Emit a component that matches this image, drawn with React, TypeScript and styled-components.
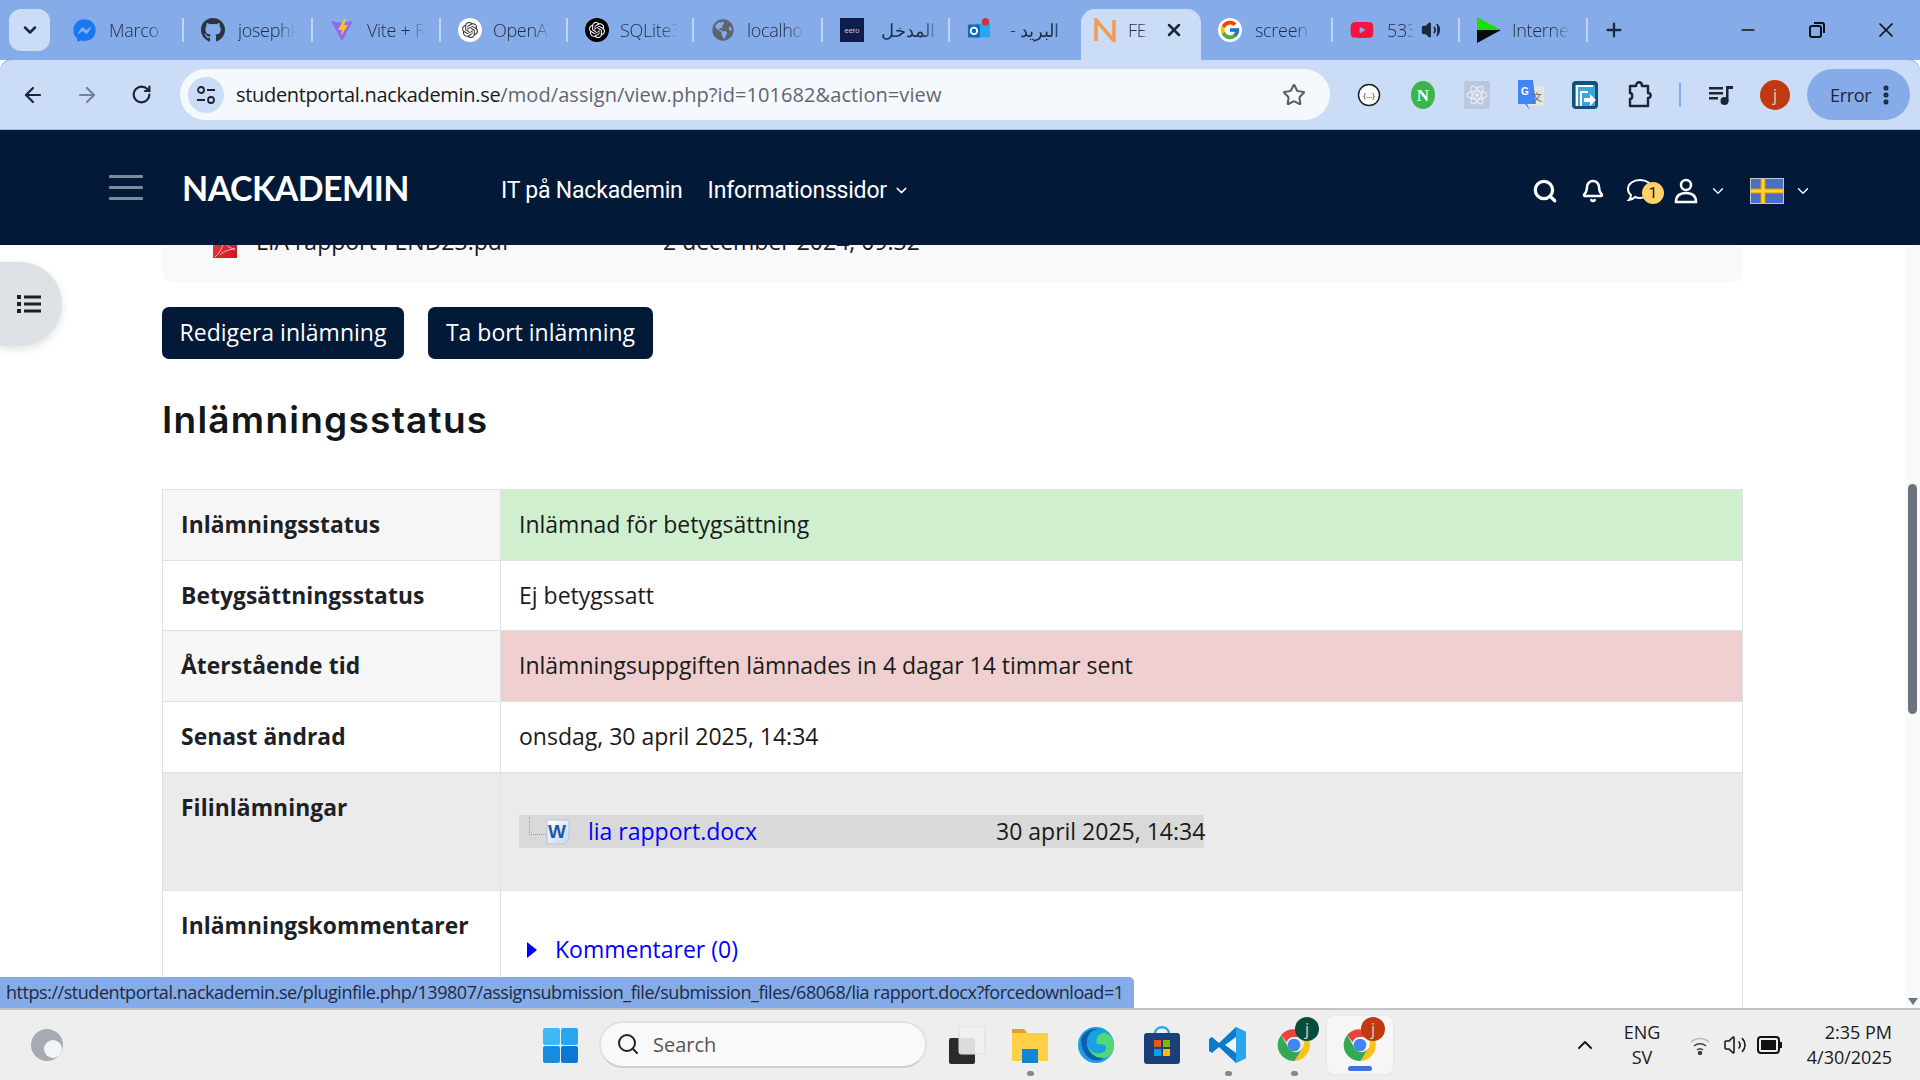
import React from 'react';
import styled, { createGlobalStyle } from 'styled-components';
import { ArrowLeft, ArrowRight, RotateCw, Star, MoreVertical, Search, Bell, ChevronDown, ChevronUp, Plus, X, Minus, Volume2 } from 'lucide-react';
import { FaFacebookMessenger, FaGithub, FaGlobeAmericas, FaYoutube } from 'react-icons/fa';
import { SiOpenai } from 'react-icons/si';
import { FcGoogle } from 'react-icons/fc';

const Global = createGlobalStyle`
  html, body { margin: 0; padding: 0; background: #fff; overflow: hidden; }
  * { box-sizing: border-box; }
  body { font-family: "Open Sans", "DejaVu Sans", sans-serif; }
`;

const Screen = styled.div`
  position: relative; width: 1920px; height: 1080px; display: flex; flex-direction: column; overflow: hidden; background: #fff;
`;
const TabBar = styled.div`
  height: 60px; flex: none; background: #85ace8; display: flex; align-items: flex-end; padding-left: 9px;
`;
const TabToggle = styled.div`
  width: 41px; height: 42px; margin: 0 5px 9px 0; border-radius: 12px; background: #cbdcf6; display: flex; align-items: center; justify-content: center; color: #1d2a3e;
`;
const Tab = styled.div<{ $w: number; $sep?: boolean; $active?: boolean }>`
  position: relative; width: ${p => p.$w}px; height: 51px; flex: none; display: flex; align-items: center; padding: 0 0 9px ${p => p.$active ? 12 : 17}px; gap: 13px;
  ${p => p.$active ? 'background:#cbdcf6;border-radius:14px 14px 0 0;' : ''}
  &::after { content: ""; position: absolute; right: 0; top: 9px; width: 2px; height: 24px; background: ${p => p.$sep ? '#c3d5f3' : 'transparent'}; }
`;
const TabIcon = styled.span`
  width: 24px; height: 26px; flex: none; display: flex; align-items: center; justify-content: center;
`;
const IconDot = styled.span<{ $bg: string }>`
  width: 24px; height: 24px; border-radius: 50%; background: ${p => p.$bg}; display: flex; align-items: center; justify-content: center;
`;
const TabLabel = styled.span<{ $w?: number; $shift?: number }>`
  width: ${p => p.$w ?? 58}px; margin-left: ${p => p.$shift ?? 0}px; flex: none; white-space: nowrap; font-size: 18px; font-weight: 300; letter-spacing: -0.3px; color: #1e2c44;
  -webkit-mask-image: linear-gradient(90deg, #000 70%, transparent 100%); mask-image: linear-gradient(90deg, #000 70%, transparent 100%);
`;
const TabClose = styled.span`
  display: flex; margin-left: 3px; color: #1d2a3e;
`;
const TabSound = styled.span`
  display: flex; margin-left: -6px; color: #1d2a3e;
`;
const NewTab = styled.div`
  width: 52px; height: 51px; padding-bottom: 9px; display: flex; align-items: center; justify-content: center; color: #1d2a3e;
`;
const WindowButtons = styled.div`
  margin-left: auto; height: 60px; display: flex; align-items: center; color: #111;
`;
const WindowButton = styled.span`
  width: 69px; display: flex; justify-content: center;
`;
const Toolbar = styled.div`
  height: 70px; flex: none; background: #cbdcf6; border-radius: 12px 12px 0 0; display: flex; align-items: flex-start; padding: 9px 10px 0 6px; border-bottom: 1px solid #aab6c8; color: #1d2a3e;
  box-shadow: 0 -1px 0 #85ace8;
`;
const ToolCell = styled.div<{ $muted?: boolean; $w?: number; $pl?: number }>`
  width: ${p => p.$w ?? 54}px; height: 51px; flex: none; padding-left: ${p => p.$pl ?? 0}px; display: flex; align-items: center; justify-content: center; color: ${p => p.$muted ? '#75839a' : '#1c2535'};
`;
const AddressBar = styled.div`
  width: 1150px; height: 51px; flex: none; margin: 0 12px; border-radius: 26px; background: #f5f8fd; display: flex; align-items: center; padding-left: 8px;
`;
const SiteInfo = styled.span`
  width: 36px; height: 36px; border-radius: 50%; background: #cbdcf6; display: flex; align-items: center; justify-content: center; color: #1c2535;
`;
const UrlText = styled.span`
  margin-left: 12px; font-size: 20px; letter-spacing: -0.31px; color: #1a1a1a; white-space: nowrap;
  em { font-style: normal; color: #5f6673; letter-spacing: 0.08px; }
`;
const StarSlot = styled.span`
  margin-left: auto; margin-right: 24px; display: flex; color: #555c66;
`;
const ToolSep = styled.span`
  width: 2px; height: 24px; margin: 14px 20px 0 13px; background: #85ace8; flex: none;
`;
const Avatar = styled.span<{ $bg: string; $size?: number }>`
  width: ${p => p.$size ?? 30}px; height: ${p => p.$size ?? 30}px; border-radius: 50%; background: ${p => p.$bg}; color: #e8cdbd; display: flex; align-items: center; justify-content: center; font-size: 16px;
`;
const BadgeAvatar = styled(Avatar)`
  position: absolute; right: 8px; top: 1px;
`;
const ErrorPill = styled.div`
  width: 103px; height: 51px; margin-left: 6px; border-radius: 26px; background: #85ace8; display: flex; align-items: center; padding-left: 23px; font-size: 18px; letter-spacing: -0.3px; color: #1c2535; gap: 3px;
`;
const NavBar = styled.header`
  height: 115px; flex: none; background: #021938; display: flex; align-items: center; padding-left: 109px; color: #fff;
`;
const Hamburger = styled.div`
  width: 34px; height: 25px; display: flex; flex-direction: column; justify-content: space-between; flex: none;
  span { display: block; height: 3px; background: #7e8b9d; border-radius: 1px; }
`;
const Logo = styled.div`
  margin-left: 39px; width: 226px; font-family: "Lato", sans-serif; font-size: 34px; font-weight: 700; letter-spacing: -0.55px; white-space: nowrap;
`;
const NavLink = styled.div<{ $first?: boolean }>`
  margin: 6px 0 0 ${p => p.$first ? 93 : 25}px; font-family: "Roboto", sans-serif; font-size: 23px; display: flex; align-items: center; gap: 6px; white-space: nowrap; letter-spacing: -0.2px;
`;
const NavRight = styled.div`
  margin: 6px 0 0 auto; padding-right: 107px; display: flex; align-items: center;
`;
const NavCell = styled.div<{ $w: number }>`
  position: relative; width: ${p => p.$w}px; display: flex; justify-content: center; align-items: center;
`;
const Badge = styled.span`
  position: absolute; left: 25px; top: 4px; width: 22px; height: 22px; border-radius: 50%; background: #ffd166; color: #111; font-size: 15px; display: flex; align-items: center; justify-content: center; font-family: "Roboto", sans-serif;
`;
const FlagBox = styled.div`
  width: 34px; height: 26px; margin: 0 9px 0 22px; display: flex;
`;
const Body = styled.div`
  flex: 1; min-height: 0; display: flex; overflow: hidden;
`;
const Main = styled.main`
  position: relative; flex: 1; padding: 0 162px; overflow: hidden; color: #1a1a1a;
`;
const FileCard = styled.div`
  width: 1581px; height: 38px; background: #f8f9fa; border-radius: 0 0 12px 12px; overflow: hidden; display: flex; align-items: flex-end; padding: 0 0 25px 51px; font-size: 23px; line-height: 33px;
`;
const PdfMark = styled.svg`
  width: 24px; height: 30px; flex: none;
`;
const CardName = styled.span`
  margin-left: 19px; width: 407px; flex: none; white-space: nowrap;
`;
const Buttons = styled.div`
  display: flex; gap: 24px; margin-top: 24px;
`;
const Btn = styled.div<{ $w: number }>`
  width: ${p => p.$w}px; height: 52px; border-radius: 7px; background: #021938; color: #fff; font-size: 23px; padding-bottom: 2px; display: flex; align-items: center; justify-content: center; white-space: nowrap;
`;
const Heading = styled.h2`
  margin: 36px 0 44px; height: 50px; font-family: "Inter", sans-serif; font-size: 37px; line-height: 50px; font-weight: 600; letter-spacing: 1.25px; color: #14171a;
`;
const Table = styled.table`
  width: 1581px; table-layout: fixed; border-collapse: collapse; font-size: 23px; line-height: 33px;
`;
const Row = styled.tr<{ $h: number }>`
  height: ${p => p.$h}px;
`;
const Th = styled.th<{ $bg?: string }>`
  width: 338px; padding: 18px 0 0 18px; vertical-align: top; text-align: left; font-weight: 700; font-size: 22.8px; letter-spacing: 0.08px; background: ${p => p.$bg ?? '#fff'}; border: 1px solid #dee2e6; white-space: nowrap; color: #1d2125;
`;
const Td = styled.td<{ $bg?: string; $pt?: number }>`
  padding: ${p => p.$pt ?? 18}px 0 0 18px; vertical-align: top; background: ${p => p.$bg ?? '#fff'}; border: 1px solid #dee2e6;
`;
const FileRow = styled.div`
  width: 685px; height: 33px; background: #d9d9d9; display: flex; align-items: center; white-space: nowrap; padding-left: 10px;
`;
const TreeLine = styled.span`
  width: 17px; height: 18px; margin-top: -12px; flex: none; border-left: 1px dotted #999; border-bottom: 1px dotted #999;
`;
const WordIcon = styled.svg`
  width: 24px; height: 26px; flex: none;
`;
const FileLink = styled.span`
  margin-left: 18px; color: #0000ff; width: 408px; flex: none;
`;
const CommentLink = styled.div`
  display: flex; align-items: center; padding-left: 8px; color: #0000ff; gap: 18px;
`;
const Triangle = styled.span`
  width: 0; height: 0; border-left: 10px solid #0000ff; border-top: 8px solid transparent; border-bottom: 8px solid transparent;
`;
const Drawer = styled.div`
  position: absolute; left: 0; top: 17px; width: 62px; height: 84px; border-radius: 0 42px 42px 0; background: #dee2e6; box-shadow: 0 3px 8px rgba(0,0,0,.12); display: flex; align-items: center; padding-left: 17px;
`;
const Scrollbar = styled.div`
  width: 15px; flex: none; background: #f8f9fa; position: relative; display: flex; flex-direction: column; align-items: center;
`;
const Thumb = styled.div`
  width: 9px; height: 230px; margin-top: 239px; border-radius: 5px; background: #6a737d;
`;
const ArrowDown = styled.div`
  margin-top: auto; margin-bottom: 3px; border-top: 7px solid #6a737d; border-left: 5px solid transparent; border-right: 5px solid transparent;
`;
const StatusBubble = styled.div`
  position: absolute; left: 0; top: 977px; width: 1134px; height: 31px; background: #85ace8; border-radius: 0 5px 0 0; padding-left: 6px; font-size: 18px; line-height: 30px; letter-spacing: -0.46px; color: #1d2a3e; white-space: nowrap; overflow: hidden;
`;
const Taskbar = styled.footer`
  height: 72px; flex: none; background: #eeeeee; border-top: 2px solid #c4c4c4; display: flex; align-items: center; padding-left: 30px; z-index: 1;
`;
const TaskApps = styled.div`
  margin-left: 477px; display: flex; align-items: center;
`;
const SearchBox = styled.div`
  width: 328px; height: 47px; margin: -2px 4px 0 21px; border-radius: 24px; background: #f9f9f9; border: 2px solid #e2e2e2; border-bottom-color: #cfcfcf; display: flex; align-items: center; padding-left: 15px; gap: 13px; font-size: 20px; color: #555;
`;
const AppCell = styled.div<{ $active?: boolean; $dot?: boolean; $pl?: number }>`
  position: relative; width: 66px; height: 58px; padding-left: ${p => p.$pl ?? 0}px; display: flex; align-items: center; justify-content: center; flex: none;
  ${p => p.$active ? 'background:#f6f6f6;border-radius:6px;box-shadow:0 0 1px #bbb;' : ''}
  ${p => p.$dot ? '&::after{content:"";position:absolute;left:30px;bottom:-2px;width:7px;height:5px;border-radius:3px;background:#888;}' : ''}
  ${p => p.$active ? '&::after{content:"";position:absolute;left:21px;bottom:3px;width:24px;height:5px;border-radius:3px;background:#3f72d8;}' : ''}
`;
const Tray = styled.div`
  margin-left: auto; display: flex; align-items: center; color: #1a1a1a; padding-right: 28px;
`;
const TrayLang = styled.div`
  width: 70px; margin: 0 5px 0 10px; text-align: center; font-size: 18px; line-height: 25px;
`;
const TrayIcon = styled.span`
  width: 35px; display: flex; justify-content: center;
`;
const Clock = styled.div`
  width: 100px; margin-left: 5px; text-align: right; font-size: 18px; line-height: 25px; white-space: nowrap;
`;

const Chrome = ({ s = 38 }: { s?: number }) => (
  <svg width={s} height={s} viewBox="0 0 48 48">
    <path d="M24 4a20 20 0 0 1 17.3 10H24a10 10 0 0 0-9.4 6.6L7.8 11.5A20 20 0 0 1 24 4z" fill="#e8453c" />
    <path d="M41.3 14A20 20 0 0 1 25 44l8.5-14.5A10 10 0 0 0 32 14z" fill="#fbc116" />
    <path d="M25 44A20 20 0 0 1 7.8 11.5l8.7 15A10 10 0 0 0 33.5 29.5z" fill="#34a853" />
    <circle cx="24" cy="24" r="8" fill="#4285f4" />
  </svg>
);

export default function App() {
  return (
    <Screen>
      <Global />
      <TabBar>
        <TabToggle><ChevronDown size={20} strokeWidth={3} /></TabToggle>
        <Tab $w={129} $sep><TabIcon><FaFacebookMessenger size={23} color="#1877f2" /></TabIcon><TabLabel>Marco</TabLabel></Tab>
        <Tab $w={129} $sep><TabIcon><FaGithub size={28} color="#2a3340" /></TabIcon><TabLabel>josephk</TabLabel></Tab>
        <Tab $w={128} $sep>
          <TabIcon><svg width="26" height="26" viewBox="0 0 24 24"><path d="M1 3l11 2 11-2-11 20z" fill="#8f6bf0" /><path d="M14 1L8 12l4 0-1 6 7-11h-4l2-6z" fill="#ffc31f" /></svg></TabIcon>
          <TabLabel>Vite + R</TabLabel>
        </Tab>
        <Tab $w={127} $sep><TabIcon><IconDot $bg="#fff"><SiOpenai size={16} color="#333" /></IconDot></TabIcon><TabLabel $shift={-2}>OpenA</TabLabel></Tab>
        <Tab $w={126} $sep><TabIcon><IconDot $bg="#000"><SiOpenai size={16} color="#fff" /></IconDot></TabIcon><TabLabel $shift={-2}>SQLite3</TabLabel></Tab>
        <Tab $w={129} $sep><TabIcon><FaGlobeAmericas size={22} color="#5b6470" /></TabIcon><TabLabel $shift={-1}>localho</TabLabel></Tab>
        <Tab $w={127} $sep>
          <TabIcon><svg width="24" height="24" viewBox="0 0 24 24"><rect width="24" height="24" fill="#0f1d4a" /><text x="12" y="15" textAnchor="middle" fontSize="7.5" fontFamily="Liberation Sans" fill="#c4cadb">eero</text></svg></TabIcon>
          <TabLabel $w={58} $shift={4}>المدخل</TabLabel>
        </Tab>
        <Tab $w={131}>
          <TabIcon><svg width="26" height="26" viewBox="0 0 26 26"><rect x="9" y="6" width="16" height="15" fill="#28a8ea" /><rect x="1" y="7" width="13" height="14" rx="1" fill="#0f6cbd" /><circle cx="7.5" cy="14" r="3.5" fill="none" stroke="#fff" strokeWidth="2" /><circle cx="20" cy="4" r="4" fill="#d13438" /></svg></TabIcon>
          <TabLabel $w={60} $shift={6}>- البريد</TabLabel>
        </Tab>
        <Tab $w={120} $active>
          <TabIcon><svg width="24" height="24" viewBox="0 0 24 24"><path d="M3 23V2l18 21V2" fill="none" stroke="#f59a50" strokeWidth="3.5" /></svg></TabIcon>
          <TabLabel $w={20} $shift={-2}>FEI</TabLabel>
          <TabClose><X size={20} strokeWidth={3} /></TabClose>
        </Tab>
        <Tab $w={132} $sep><TabIcon><IconDot $bg="#fff"><FcGoogle size={22} /></IconDot></TabIcon><TabLabel>screen</TabLabel></Tab>
        <Tab $w={127} $sep>
          <TabIcon><FaYoutube size={26} color="#f8123f" /></TabIcon><TabLabel $w={27}>533)</TabLabel>
          <TabSound><Volume2 size={20} fill="#1d2a3e" /></TabSound>
        </Tab>
        <Tab $w={128} $sep>
          <TabIcon><svg width="24" height="26" viewBox="0 0 24 26"><path d="M0 0l24 13H0z" fill="#19e000" /><path d="M0 26l24-13H0z" fill="#0a0a0a" /></svg></TabIcon>
          <TabLabel $shift={-2}>Interne</TabLabel>
        </Tab>
        <NewTab><Plus size={22} strokeWidth={2.5} /></NewTab>
        <WindowButtons>
          <WindowButton><Minus size={20} strokeWidth={2} /></WindowButton>
          <WindowButton><svg width="18" height="18" viewBox="0 0 18 18" fill="none" stroke="#111" strokeWidth="2"><rect x="2" y="5" width="11" height="11" rx="2" /><path d="M6 2h8a2 2 0 0 1 2 2v8" /></svg></WindowButton>
          <WindowButton><X size={24} strokeWidth={1.7} /></WindowButton>
        </WindowButtons>
      </TabBar>
      <Toolbar>
        <ToolCell><ArrowLeft size={24} strokeWidth={2.2} /></ToolCell>
        <ToolCell $muted><ArrowRight size={24} strokeWidth={2.2} /></ToolCell>
        <ToolCell><RotateCw size={21} strokeWidth={2.5} /></ToolCell>
        <AddressBar>
          <SiteInfo>
            <svg width="20" height="20" viewBox="0 0 20 20" fill="none" stroke="#1c2535" strokeWidth="1.8"><circle cx="5" cy="5" r="3" /><path d="M11 5h8M1 15h8" /><circle cx="15" cy="15" r="3" /></svg>
          </SiteInfo>
          <UrlText>studentportal.nackademin.se<em>/mod/assign/view.php?id=101682&action=view</em></UrlText>
          <StarSlot><Star size={24} strokeWidth={2} /></StarSlot>
        </AddressBar>
        <ToolCell><svg width="24" height="24" viewBox="0 0 24 24"><circle cx="12" cy="12" r="10.5" fill="#fff" stroke="#222" strokeWidth="1.5" /><text x="12" y="15" textAnchor="middle" fontSize="8" fill="#222">{'{…}'}</text></svg></ToolCell>
        <ToolCell><svg width="24" height="28" viewBox="0 0 24 28"><ellipse cx="12" cy="14" rx="12" ry="14" fill="#3cb54a" /><text x="12" y="20" textAnchor="middle" fontSize="17" fontWeight="700" fontFamily="Liberation Serif" fill="#fff">N</text></svg></ToolCell>
        <ToolCell><svg width="26" height="28" viewBox="0 0 26 28"><rect width="26" height="28" rx="2" fill="#b9c8df" /><g fill="none" stroke="#e6edf8" strokeWidth="1.2"><ellipse cx="13" cy="14" rx="10" ry="4" /><ellipse cx="13" cy="14" rx="10" ry="4" transform="rotate(60 13 14)" /><ellipse cx="13" cy="14" rx="10" ry="4" transform="rotate(120 13 14)" /></g><circle cx="13" cy="14" r="2" fill="#e6edf8" /></svg></ToolCell>
        <ToolCell><svg width="26" height="30" viewBox="0 0 26 30"><rect x="10" y="6" width="16" height="20" fill="#e8e6dc" /><path d="M0 0h15l3 24H9l3 6-5-6H0z" fill="#4285f4" /><text x="7" y="15" textAnchor="middle" fontSize="10" fontWeight="700" fontFamily="Liberation Sans" fill="#fff">G</text><text x="19" y="21" textAnchor="middle" fontSize="10" fontFamily="Noto Sans CJK SC" fill="#666">文</text></svg></ToolCell>
        <ToolCell><svg width="26" height="28" viewBox="0 0 26 28"><rect width="26" height="28" rx="4" fill="#12507e" /><rect x="3" y="4" width="20" height="21" fill="#38a6d8" /><path d="M5 25V5h16M9 25V11h7" fill="none" stroke="#fff" strokeWidth="2" /><path d="M12 17h6v-4l6 6-6 6v-4h-6z" fill="#fff" /></svg></ToolCell>
        <ToolCell $pl={4}>
          <svg width="26" height="28" viewBox="0 0 26 28" fill="none" stroke="#1c2535" strokeWidth="2.4" strokeLinejoin="round"><path d="M2 5h6c0-5 6-5 6 0h6v7c3.500 0 3.500 5 0 5v8H2v-7c3 0 3-6 0-6z" /></svg>
        </ToolCell>
        <ToolSep />
        <ToolCell $w={40}><svg width="24" height="22" viewBox="0 0 24 22" fill="#1c2535"><rect y="3" width="14" height="2.5" /><rect y="8" width="14" height="2.5" /><rect y="13" width="9" height="2.5" /><rect x="17" y="2" width="2.5" height="15" /><rect x="17" y="2" width="7" height="3" /><circle cx="15.5" cy="17" r="4" /></svg></ToolCell>
        <ToolCell $w={60} $pl={8}><Avatar $bg="#c0390f">j</Avatar></ToolCell>
        <ErrorPill>Error<MoreVertical size={24} strokeWidth={3} /></ErrorPill>
      </Toolbar>
      <NavBar>
        <Hamburger><span /><span /><span /></Hamburger>
        <Logo>NACKADEMIN</Logo>
        <NavLink $first>IT på Nackademin</NavLink>
        <NavLink>Informationssidor<ChevronDown size={17} strokeWidth={2} /></NavLink>
        <NavRight>
          <NavCell $w={48}><Search size={26} strokeWidth={3} /></NavCell>
          <NavCell $w={48}><Bell size={24} strokeWidth={2.5} /></NavCell>
          <NavCell $w={47}>
            <svg width="30" height="26" viewBox="0 0 30 26" fill="none" stroke="#fff" strokeWidth="2"><path d="M14 2c6.600 0 12 3.600 12 9s-5.400 9-12 9c-2 0-3 0-5-1-2 2-4 3-6 3 1-1 2-3 2-5-2-1.500-3-3.500-3-6 0-5.400 5.400-9 12-9z" /></svg>
            <Badge>1</Badge>
          </NavCell>
          <NavCell $w={44}><svg width="24" height="26" viewBox="0 0 24 26" fill="none" stroke="#fff" strokeWidth="2.5"><circle cx="12" cy="7" r="5" /><path d="M2 24c0-6 4-9 10-9s10 3 10 9z" /></svg></NavCell>
          <NavCell $w={20}><ChevronDown size={18} strokeWidth={1.8} /></NavCell>
          <FlagBox><svg width="34" height="26" viewBox="0 0 34 26"><rect width="34" height="26" fill="#c2c6cc" /><rect x="1" y="1" width="32" height="24" fill="#4a70c4" /><rect x="10.500" y="1" width="5" height="24" fill="#f08a1c" /><rect x="1" y="10.500" width="32" height="5" fill="#f08a1c" /><rect x="11.500" y="1" width="3" height="24" fill="#fbdc14" /><rect x="1" y="11.500" width="32" height="3" fill="#fbdc14" /></svg></FlagBox>
          <NavCell $w={20}><ChevronDown size={18} strokeWidth={1.8} /></NavCell>
        </NavRight>
      </NavBar>
      <Body>
        <Main>
          <FileCard>
            <PdfMark viewBox="0 0 24 30"><defs><linearGradient id="pdf" x1="0" y1="0" x2="1" y2="1"><stop offset="0" stopColor="#f04a4a" /><stop offset="1" stopColor="#c8141c" /></linearGradient></defs><rect width="24" height="30" fill="url(#pdf)" /><path d="M2 29c5-4 8-10 9-17 2 6 5 8 11 9-5 0-11 2-15 6" fill="none" stroke="#f7b4b4" strokeWidth="1" /></PdfMark>
            <CardName>LIA rapport FEND23.pdf</CardName>
            <span>2 december 2024, 09:32</span>
          </FileCard>
          <Buttons>
            <Btn $w={242}>Redigera inlämning</Btn>
            <Btn $w={225}>Ta bort inlämning</Btn>
          </Buttons>
          <Heading>Inlämningsstatus</Heading>
          <Table>
            <tbody>
              <Row $h={71}><Th $bg="#f6f6f6">Inlämningsstatus</Th><Td $bg="#cfefcf">Inlämnad för betygsättning</Td></Row>
              <Row $h={70}><Th>Betygsättningsstatus</Th><Td>Ej betygssatt</Td></Row>
              <Row $h={71}><Th $bg="#f6f6f6">Återstående tid</Th><Td $bg="#efcfcf">Inlämningsuppgiften lämnades in 4 dagar 14 timmar sent</Td></Row>
              <Row $h={71}><Th>Senast ändrad</Th><Td>onsdag, 30 april 2025, 14:34</Td></Row>
              <Row $h={118}>
                <Th $bg="#ebebeb">Filinlämningar</Th>
                <Td $bg="#ebebeb" $pt={42}>
                  <FileRow>
                    <TreeLine />
                    <WordIcon viewBox="0 0 24 26"><defs><linearGradient id="word" x1="0" y1="0" x2="1" y2="1"><stop offset="0" stopColor="#ffffff" /><stop offset="1" stopColor="#c6d6ee" /></linearGradient></defs><path d="M1 1h22v19l-5 5H1z" fill="url(#word)" stroke="#b4c4dc" /><text x="11" y="19" textAnchor="middle" fontSize="19" fontWeight="700" fontFamily="Liberation Sans" fill="#1c57b0">W</text></WordIcon>
                    <FileLink>lia rapport.docx</FileLink>
                    <span>30 april 2025, 14:34</span>
                  </FileRow>
                </Td>
              </Row>
              <Row $h={120}>
                <Th>Inlämningskommentarer</Th>
                <Td $pt={42}><CommentLink><Triangle />Kommentarer (0)</CommentLink></Td>
              </Row>
            </tbody>
          </Table>
          <Drawer><svg width="24" height="20" viewBox="0 0 24 20" fill="#1d2125"><rect x="0" y="1" width="4" height="4" /><rect x="0" y="8" width="4" height="4" /><rect x="0" y="15" width="4" height="4" /><rect x="7" y="1.500" width="17" height="3" /><rect x="7" y="8.500" width="17" height="3" /><rect x="7" y="15.500" width="17" height="3" /></svg></Drawer>
        </Main>
        <Scrollbar><Thumb /><ArrowDown /></Scrollbar>
      </Body>
      <Taskbar>
        <svg width="36" height="36" viewBox="0 0 36 36"><ellipse cx="17" cy="18" rx="16" ry="16" fill="#a4abb3" /><circle cx="23" cy="22" r="9" fill="#f2f4f6" /></svg>
        <TaskApps>
          <svg width="35" height="35" viewBox="0 0 35 35"><rect width="17" height="17" rx="2" fill="#3fb9f5" /><rect x="18" width="17" height="17" rx="2" fill="#2aa6ee" /><rect y="18" width="17" height="17" rx="2" fill="#148ce0" /><rect x="18" y="18" width="17" height="17" rx="2" fill="#0a78d4" /></svg>
          <SearchBox><Search size={24} color="#222" strokeWidth={2} />Search</SearchBox>
          <AppCell $pl={8}><svg width="38" height="38" viewBox="0 0 38 38"><rect x="0" y="12" width="26" height="26" rx="2" fill="#2a2a2a" /><rect x="10" y="0" width="26" height="28" rx="2" fill="#f0f0f0" fillOpacity=".9" stroke="#ddd" /></svg></AppCell>
          <AppCell $dot><svg width="38" height="36" viewBox="0 0 38 36"><path d="M1 2h12l3 4h21v28H1z" fill="#ffcf48" /><path d="M1 2h12l3 4H1z" fill="#e0a020" /><rect x="11" y="22" width="16" height="14" fill="#0f86d6" /></svg></AppCell>
          <AppCell><svg width="38" height="38" viewBox="0 0 38 38"><circle cx="19" cy="19" r="18" fill="#1a9fe0" /><path d="M37 21c0 8-8 12-14 12-9 0-16-7-13-17 1 9 9 13 14 11 4-1 6-4 5-6-1-3-6-3-9-3-3-8 6-14 11-10 5 3 6 8 6 13z" fill="#52d67a" /><path d="M4 14C6 6 14 2 21 3 13 4 9 11 10 18c1 8 8 15 17 14-8 6-22 1-23-18z" fill="#0c5fb0" /></svg></AppCell>
          <AppCell><svg width="36" height="38" viewBox="0 0 36 38"><path d="M11 8c0-9 14-9 14 0" fill="none" stroke="#29a8e8" strokeWidth="2.5" /><rect y="7" width="36" height="31" rx="3" fill="#1b3f78" /><rect x="10" y="14" width="7" height="7" fill="#f25022" /><rect x="19" y="14" width="7" height="7" fill="#7fba00" /><rect x="10" y="23" width="7" height="7" fill="#00a4ef" /><rect x="19" y="23" width="7" height="7" fill="#ffb900" /></svg></AppCell>
          <AppCell $dot><svg width="38" height="38" viewBox="0 0 38 38"><path d="M27 1l10 5v26l-10 5L10 21 3 27l-3-2V13l3-2 7 6z" fill="#0c7bcb" /><path d="M27 1l10 5v26l-10 5z" fill="#2aa5ee" /><path d="M27 11v16l-11-8z" fill="#eef4f8" /></svg></AppCell>
          <AppCell $dot>
            <Chrome />
            <BadgeAvatar $bg="#064e3b" $size={24}>j</BadgeAvatar>
          </AppCell>
          <AppCell $active>
            <Chrome />
            <BadgeAvatar $bg="#c0390f" $size={24}>j</BadgeAvatar>
          </AppCell>
        </TaskApps>
        <Tray>
          <ChevronUp size={24} strokeWidth={2} />
          <TrayLang>ENG<br />SV</TrayLang>
          <TrayIcon><svg width="24" height="24" viewBox="0 0 24 24" fill="none" stroke="#444" strokeWidth="1.5"><path d="M3 9a13 13 0 0 1 18 0" stroke="#bbb" /><path d="M6 13a9 9 0 0 1 12 0" /><path d="M9 17a4 4 0 0 1 6 0" /><circle cx="12" cy="20" r="1.5" fill="#222" /></svg></TrayIcon>
          <TrayIcon><Volume2 size={24} strokeWidth={1.6} /></TrayIcon>
          <TrayIcon><svg width="26" height="20" viewBox="0 0 26 20" fill="none"><rect x="1" y="2" width="21" height="16" rx="3" stroke="#111" strokeWidth="2" /><rect x="4" y="5" width="15" height="10" fill="#111" /><rect x="23" y="7" width="2" height="6" fill="#111" /></svg></TrayIcon>
          <Clock>2:35 PM<br />4/30/2025</Clock>
        </Tray>
      </Taskbar>
      <StatusBubble>https://studentportal.nackademin.se/pluginfile.php/139807/assignsubmission_file/submission_files/68068/lia rapport.docx?forcedownload=1</StatusBubble>
    </Screen>
  );
}
